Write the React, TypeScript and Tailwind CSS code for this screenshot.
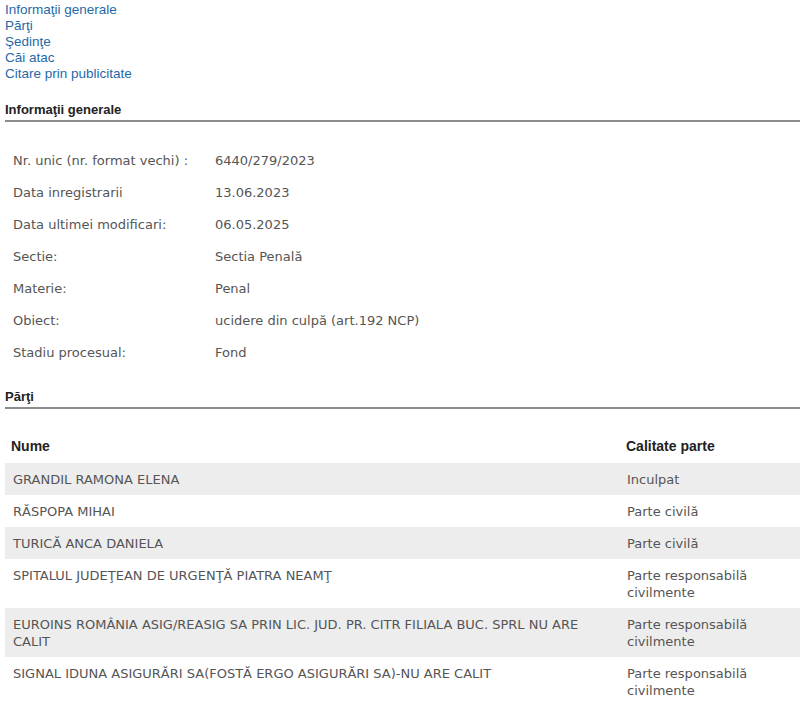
const NAV_LINKS = [
  "Informaţii generale",
  "Părţi",
  "Şedinţe",
  "Căi atac",
  "Citare prin publicitate",
];

const INFO = [
  ["Nr. unic (nr. format vechi) :", "6440/279/2023"],
  ["Data inregistrarii", "13.06.2023"],
  ["Data ultimei modificari:", "06.05.2025"],
  ["Sectie:", "Sectia Penală"],
  ["Materie:", "Penal"],
  ["Obiect:", "ucidere din culpă (art.192 NCP)"],
  ["Stadiu procesual:", "Fond"],
];

const PARTI = [
  ["GRANDIL RAMONA ELENA", "Inculpat"],
  ["RĂSPOPA MIHAI", "Parte civilă"],
  ["TURICĂ ANCA DANIELA", "Parte civilă"],
  ["SPITALUL JUDEŢEAN DE URGENŢĂ PIATRA NEAMŢ", "Parte responsabilă civilmente"],
  [
    "EUROINS ROMÂNIA ASIG/REASIG SA PRIN LIC. JUD. PR. CITR FILIALA BUC. SPRL NU ARE CALIT",
    "Parte responsabilă civilmente",
  ],
  ["SIGNAL IDUNA ASIGURĂRI SA(FOSTĂ ERGO ASIGURĂRI SA)-NU ARE CALIT", "Parte responsabilă civilmente"],
];

function SectionTitle({ title, className }: { title: string; className?: string }) {
  return (
    <div
      className={`ml-[5px] pb-[2px] border-b-2 border-[#8c8c8c] text-[13px] leading-[16px] font-bold text-[#222] ${className ?? ""}`}
    >
      {title}
    </div>
  );
}

export default function App() {
  return (
    <div className="w-[800px] min-h-[725px] bg-white font-['Liberation_Sans',Arial,sans-serif]">
      <div className="pt-[2px] pl-[5px] flex flex-col">
        {NAV_LINKS.map((l) => (
          <a key={l} href="#" className="text-[13.5px] leading-[16px] text-[#1f6aa8] w-fit">
            {l}
          </a>
        ))}
      </div>

      <SectionTitle title="Informaţii generale" className="mt-[20px]" />

      <div className="mt-[23px] pl-[13px] font-['DejaVu_Sans',sans-serif] text-[13px] text-[#555]">
        {INFO.map(([k, v]) => (
          <div key={k} className="grid grid-cols-[202px_1fr] h-[32px] items-center">
            <span>{k}</span>
            <span>{v}</span>
          </div>
        ))}
      </div>

      <SectionTitle title="Părţi" className="mt-[20px]" />

      <div className="mt-[20px] ml-[5px]">
        <div className="grid grid-cols-[614px_1fr] h-[34px] items-center text-[14px] font-bold text-[#222]">
          <span className="pl-[6px]">Nume</span>
          <span className="pl-[7px]">Calitate parte</span>
        </div>
        {PARTI.map(([name, role], i) => (
          <div
            key={name}
            className={`grid grid-cols-[614px_1fr] pt-[8px] pb-[7px] leading-[17px] font-['DejaVu_Sans',sans-serif] text-[13px] text-[#555] ${
              i % 2 === 0 ? "bg-[#ededed]" : "bg-white"
            }`}
          >
            <span className="pl-[8px] pr-[20px]">{name}</span>
            <span className="pl-[8px] pr-[40px]">{role}</span>
          </div>
        ))}
      </div>
    </div>
  );
}
